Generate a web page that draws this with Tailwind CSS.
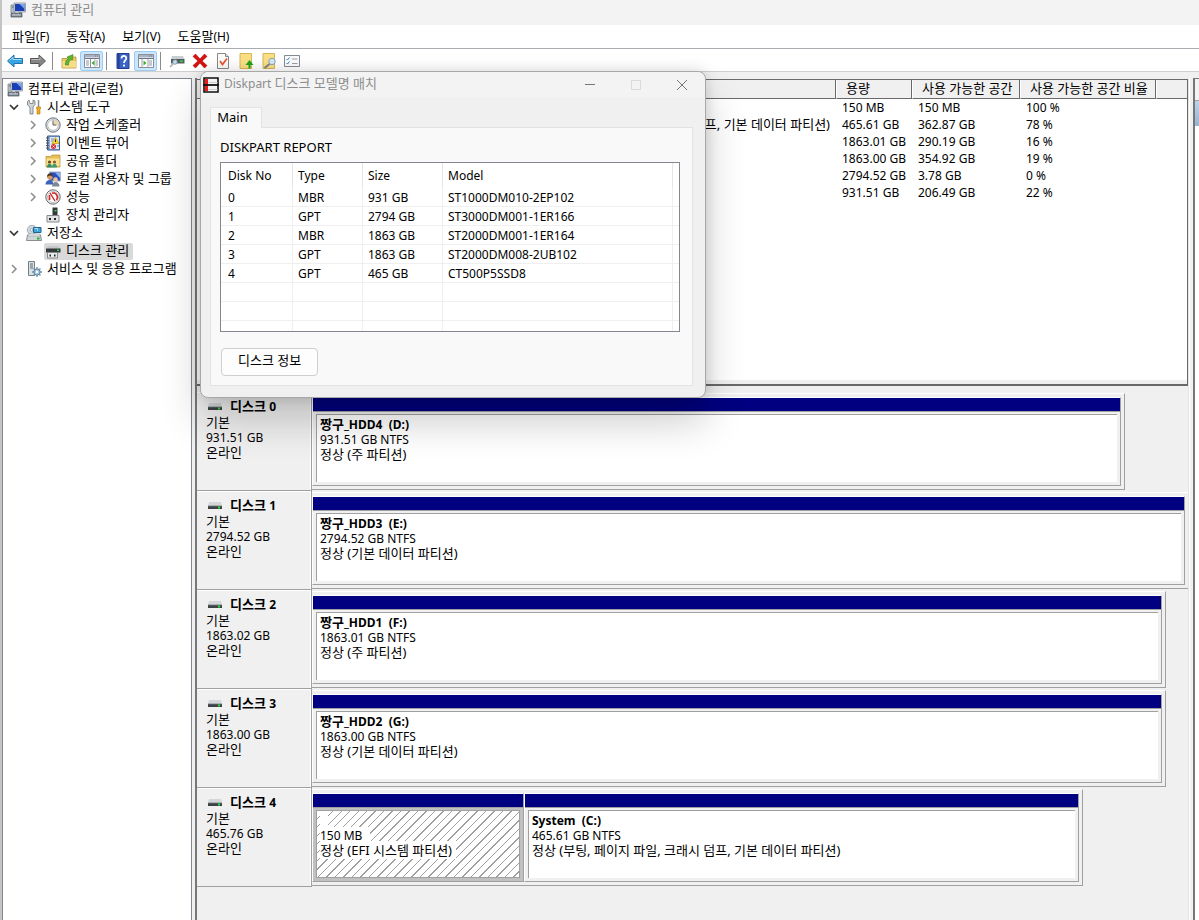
<!DOCTYPE html>
<html lang="ko">
<head>
<meta charset="utf-8">
<title>컴퓨터 관리</title>
<script src="https://cdn.jsdelivr.net/npm/@tailwindcss/browser@4"></script>
</head>
<body class="relative flex min-h-screen flex-col overflow-x-hidden border-l-2 border-[#c4c4c4] bg-[#f0f0f0] font-['Noto_Sans','Noto_Sans_CJK_KR',sans-serif] text-xs text-black">

<svg class="hidden" aria-hidden="true">
  <symbol id="computer" viewBox="0 0 16 16">
    <path d="M1 3h4v8H1z" fill="#b9bec6" stroke="#6f7883" stroke-width=".7"/>
    <path d="M2 5h2" stroke="#4a7b43"/>
    <path d="M4 1h11.5v9H4z" fill="#d5dae2" stroke="#7d8590" stroke-width=".7"/>
    <path d="M5 2h9.5v7H5z" fill="#1a3fb5"/><path d="M9.500 2h5v5z" fill="#7aa6ee"/>
    <path d="M8 10h4v1.500H8z" fill="#8a919b"/>
    <path d="M1 11.500h11v3.500H1z" fill="#7b868f" stroke="#47515a" stroke-width=".7"/>
    <path d="M2 13h9M4 11.500v1M8.500 11.500v1" stroke="#dfe4e8" stroke-width=".8"/>
  </symbol>
  <symbol id="open" viewBox="0 0 10 10"><path d="M1 3l4 4 4-4" fill="none" stroke="#333" stroke-width="1.700"/></symbol>
  <symbol id="closed" viewBox="0 0 10 10"><path d="M3 1l4 4-4 4" fill="none" stroke="#8b8b8b" stroke-width="1.500"/></symbol>
  <symbol id="disk" viewBox="0 0 14 8">
    <path d="M1 0h12l1 4H0z" fill="#d4d7da"/><path d="M0 4h14v3H0z" fill="#3d4245"/>
    <path d="M0 4h14" stroke="#70767a" stroke-width=".8"/><path d="M10 4.500h2v2h-2z" fill="#27e03a"/>
  </symbol>
  <symbol id="console" viewBox="0 0 16 14">
    <path d="M.5.500h15v13H.5z" fill="#fff" stroke="#878f9b"/><path d="M1 1h14v2.500H1z" fill="#a9b3c3"/>
    <path d="M1 4.500h14M11 2h1M13 2h1" stroke="#6a7482"/>
  </symbol>
</svg>

<header class="flex h-[25px] items-center gap-[5px] bg-[#f3f3f3] pb-[5px] pl-2 text-[13px] text-[#8d8d8d]">
  <svg class="size-4"><use href="#computer"/></svg><h1>컴퓨터 관리</h1>
</header>

<nav class="flex h-6 items-center gap-[17px] border-b border-[#a9adb2] bg-white pl-[10px] text-xs" aria-label="메뉴">
  <button><span class="text-[13px]">파일</span>(F)</button>
  <button><span class="text-[13px]">동작</span>(A)</button>
  <button><span class="text-[13px]">보기</span>(V)</button>
  <button><span class="text-[13px]">도움말</span>(H)</button>
</nav>

<div class="flex h-[23px] items-center border-b border-[#cfcfcf] bg-white pt-[2px] pl-px" role="toolbar" aria-label="도구 모음">
  <button class="flex h-5 w-[23px] items-center justify-center" aria-label="뒤로"><svg class="size-4" viewBox="0 0 16 16"><path d="M.5 8L7 2v3.500h8.500v5H7V14z" fill="#35a6e3" stroke="#2470a8"/><path d="M2.500 7.500L6 4.300v2.200h8.500" fill="none" stroke="#a6dcf7"/></svg></button>
  <button class="flex h-5 w-[23px] items-center justify-center" aria-label="앞으로"><svg class="size-4" viewBox="0 0 16 16"><path d="M15.500 8L9 2v3.500H.5v5H9V14z" fill="#868686" stroke="#555"/><path d="M1.500 6.500H10V4.300" fill="none" stroke="#bdbdbd"/></svg></button>
  <span class="mr-1 ml-[3px] h-[18px] w-px bg-[#8c8c8c]"></span>
  <button class="flex h-5 w-[23px] items-center justify-center" aria-label="위로"><svg class="size-4" viewBox="0 0 16 16"><path d="M1 5.500h5l1-1.500h8v11H1z" fill="#e9c765" stroke="#b8923a" stroke-width=".8"/><path d="M1.500 8H15v6.500H1.500z" fill="#f7de8b"/><path d="M4.500 12C4 8.500 5 7 7.500 5.500L6 4l6-2.500L11.500 7 10 6.500C8 8 7.500 9.500 7.500 12z" fill="#5cb531" stroke="#3d8a1f" stroke-width=".6"/></svg></button>
  <button class="flex h-5 w-[23px] items-center justify-center rounded-xs border border-[#99cdf5] bg-[#cce6fb]" aria-label="콘솔 트리 표시" aria-pressed="true"><svg class="h-[14px] w-4" viewBox="0 0 16 14"><use href="#console"/><path d="M6.500 5v8.500" stroke="#878f9b"/><path d="M2 7h3M2 9h3M2 11h3M12 7h2M12 9h2M12 11h2" stroke="#8b93a0"/><path d="M11 5v8" stroke="#b9c0ca"/><path d="M10.500 6.500v5L7.500 9z" fill="#3dae2b"/></svg></button>
  <span class="mr-1 ml-[3px] h-[18px] w-px bg-[#8c8c8c]"></span>
  <button class="flex h-5 w-[23px] items-center justify-center" aria-label="도움말"><svg class="size-4" viewBox="0 0 16 16"><path d="M2 .5h12v15H2z" fill="#3a63c6" stroke="#23408f"/><path d="M2.500 1h2v14h-2z" fill="#233f94"/><path d="M6.500 5.500C6.500 2 11.500 2.200 11.300 5.300 11.200 7.500 9 7.500 9 10" fill="none" stroke="#fff" stroke-width="1.700"/><circle cx="9" cy="12.600" r="1.100" fill="#fff"/></svg></button>
  <button class="flex h-5 w-[23px] items-center justify-center rounded-xs border border-[#99cdf5] bg-[#cce6fb]" aria-label="작업 창 표시" aria-pressed="true"><svg class="h-[14px] w-4" viewBox="0 0 16 14"><use href="#console"/><path d="M4 5v8M10 5v8.500" stroke="#9aa2ae"/><path d="M11 7h3M11 9h3M11 11h3" stroke="#8b93a0"/><path d="M5.500 6.500v5l3-2.500z" fill="#3dae2b"/></svg></button>
  <span class="mr-1 ml-[3px] h-[18px] w-px bg-[#8c8c8c]"></span>
  <button class="flex h-5 w-[23px] items-center justify-center" aria-label="디스크"><svg class="size-4" viewBox="0 0 16 16"><path d="M3 3h11l1.500 3.500H2z" fill="#c9ced1"/><path d="M2 6h13.500v4.500H2z" fill="#555c60"/><path d="M11 7.500h3V9h-3z" fill="#26dc3e"/><circle cx="6" cy="9" r="2.300" fill="#c3dbe9" stroke="#7592a3" stroke-width=".8"/><path d="M4.500 10.500L1 14" stroke="#a9b1b6" stroke-width="1.600"/></svg></button>
  <button class="flex h-5 w-[23px] items-center justify-center" aria-label="삭제"><svg class="size-4" viewBox="0 0 16 16"><path d="M1 3.500L3.500 1 8 6l4.500-5L15 3.500 10 8l5 4.500-2.500 2.500L8 10l-4.500 5L1 12.500 6 8z" fill="#d8120f" stroke="#a30604" stroke-width=".6"/></svg></button>
  <button class="flex h-5 w-[23px] items-center justify-center" aria-label="속성"><svg class="size-4" viewBox="0 0 16 16"><path d="M2.500.500h8l3 3v12h-11z" fill="#fafafa" stroke="#888"/><path d="M10.500.500v3h3" fill="#ddd" stroke="#888"/><path d="M5 8l2.500 3.500L12 5.500" fill="none" stroke="#e8532a" stroke-width="1.700"/></svg></button>
  <button class="flex h-5 w-[23px] items-center justify-center" aria-label="내보내기"><svg class="size-4" viewBox="0 0 16 16"><path d="M2 .500h11.500v15H2z" fill="#f9df84" stroke="#d8b557"/><path d="M10.500 15.500V12H7.500l4-5 4 5h-3v3.500z" fill="#1fa31f"/></svg></button>
  <button class="flex h-5 w-[23px] items-center justify-center" aria-label="찾기"><svg class="size-4" viewBox="0 0 16 16"><path d="M2 .500h11.500v15H2z" fill="#f9df84" stroke="#d8b557"/><path d="M8.500 11l-5 4" stroke="#75808a" stroke-width="1.800"/><circle cx="11" cy="8.500" r="3.200" fill="#d3e9f7" stroke="#8aa0b1"/></svg></button>
  <button class="flex h-5 w-[23px] items-center justify-center" aria-label="목록"><svg class="size-4" viewBox="0 0 16 16"><path d="M.5 2.500h15v11H.5z" fill="#fbfbfb" stroke="#848b93"/><path d="M2.500 6l1 1L5.500 4.500M2.500 10l1 1 2-2.500" fill="none" stroke="#2f80ce"/><path d="M8 6h5.500M8 10.500h5.500" stroke="#9aa0a6"/></svg></button>
</div>

<main class="flex flex-1 pt-[6px]">
  <nav class="w-[190px] shrink-0 border border-b-0 border-[#828790] bg-white pt-px text-[13px]" aria-label="콘솔 트리">
    <ul>
      <li class="flex h-[18px] items-center gap-[5px] pl-1"><svg class="size-4"><use href="#computer"/></svg>컴퓨터 관리(로컬)</li>
      <li class="flex h-[18px] items-center gap-[5px] pl-[6px]"><svg class="mr-[2px] size-[10px]"><use href="#open"/></svg><svg class="size-4" viewBox="0 0 16 16"><path d="M3 1L1.500 2.500V6L4 8v7h3V8l2-2.500V2L7 1v3.500H4z" fill="#d3d6d8" stroke="#7c8286" stroke-width=".9"/><path d="M12.500 1v7" stroke="#878d92" stroke-width="1.500"/><path d="M10.500 8h4v2l-.5.500v4.500h-3v-4.500l-.5-.5z" fill="#f3a81d" stroke="#b97a0b" stroke-width=".6"/></svg>시스템 도구</li>
      <li class="flex h-[18px] items-center gap-[5px] pl-[25px]"><svg class="mr-[2px] size-[10px]"><use href="#closed"/></svg><svg class="size-4" viewBox="0 0 16 16"><circle cx="8" cy="8" r="7.200" fill="#d9dde0" stroke="#6e767c"/><circle cx="8" cy="8" r="5.300" fill="#fff" stroke="#a9b2b9" stroke-width=".7"/><path d="M8 8V3a5 5 0 0 1 5 5z" fill="#f6d9a2"/><path d="M8 3.500V8h3.500" fill="none" stroke="#4a657c"/></svg>작업 스케줄러</li>
      <li class="flex h-[18px] items-center gap-[5px] pl-[25px]"><svg class="mr-[2px] size-[10px]"><use href="#closed"/></svg><svg class="size-4" viewBox="0 0 16 16"><path d="M2.500 1h12v14h-12z" fill="#88a9d9" stroke="#39598f"/><path d="M5 2h9v12H5z" fill="#dfe9f7"/><path d="M1 3h3M1 5.500h3M1 8h3M1 10.500h3M1 13h3" stroke="#555"/><path d="M6 4h3M6 6h2M12 11h2" stroke="#6f8fc1"/><path d="M10.500 2.500l3.500 6H7z" fill="#ffd42a" stroke="#b68e00" stroke-width=".6"/><path d="M10.500 4.500v2.500" stroke="#222"/><circle cx="8.500" cy="11.500" r="2.500" fill="#d92b2b"/><path d="M7.500 10.500l2 2m0-2l-2 2" stroke="#fff" stroke-width=".8"/></svg>이벤트 뷰어</li>
      <li class="flex h-[18px] items-center gap-[5px] pl-[25px]"><svg class="mr-[2px] size-[10px]"><use href="#closed"/></svg><svg class="size-4" viewBox="0 0 16 16"><path d="M1 3.500h5l1-1.500h8v12H1z" fill="#e5be58" stroke="#b48d31" stroke-width=".7"/><path d="M1.500 5.500h13V13h-13z" fill="#f9e08e"/><circle cx="4.500" cy="9" r="1.600" fill="#6b4a2b"/><path d="M2 14.500c0-5 5-5 5 0z" fill="#2f8f6a"/><circle cx="9.500" cy="9" r="1.600" fill="#8c5b35"/><path d="M7 14.500c0-5 5-5 5 0z" fill="#3f9a76"/></svg>공유 폴더</li>
      <li class="flex h-[18px] items-center gap-[5px] pl-[25px]"><svg class="mr-[2px] size-[10px]"><use href="#closed"/></svg><svg class="size-4" viewBox="0 0 16 16"><path d="M4.500 1h11v9h-11z" fill="#2450c4" stroke="#aab2c0"/><path d="M10 1.500h5V7z" fill="#8db4f0"/><circle cx="5" cy="6" r="2.800" fill="#d29a63"/><path d="M2 6c0-5 6-5 6 0-2-2-4-2-6 0z" fill="#4d3420"/><path d="M.5 13.500c0-6 8-6 8 0z" fill="#3a62bd"/><circle cx="10.500" cy="8.500" r="2.300" fill="#f0c293"/><path d="M7 15.500c0-6 7.500-6 7.500 0z" fill="#7d8895"/></svg>로컬 사용자 및 그룹</li>
      <li class="flex h-[18px] items-center gap-[5px] pl-[25px]"><svg class="mr-[2px] size-[10px]"><use href="#closed"/></svg><svg class="size-4" viewBox="0 0 16 16"><circle cx="8" cy="8" r="7.200" fill="#f3f3f3" stroke="#62686c"/><circle cx="8" cy="8" r="5.500" fill="#fff" stroke="#9b9b9b" stroke-width=".6"/><path d="M4.500 11V6M7 4h2.500A4.600 4.600 0 0 1 11.500 11" fill="none" stroke="#d82020" stroke-width="1.600"/><path d="M5 4l5 8" stroke="#c22" stroke-width="1.400"/></svg>성능</li>
      <li class="flex h-[18px] items-center gap-[5px] pl-[42px]"><svg class="size-4" viewBox="0 0 16 16"><path d="M7.500.500h5v8h-5z" fill="#33383b"/><path d="M9.500 3h2v1.500h-2z" fill="#38d14a"/><path d="M2 8.500h12V15H2z" fill="#e1e3e4" stroke="#85898c"/><path d="M4 11h2v2H4zM9 11h2v2H9z" fill="#222"/></svg>장치 관리자</li>
      <li class="flex h-[18px] items-center gap-[5px] pl-[6px]"><svg class="mr-[2px] size-[10px]"><use href="#open"/></svg><svg class="size-4" viewBox="0 0 16 16"><circle cx="6" cy="5" r="4.700" fill="#ced8df" stroke="#8d9aa3" stroke-width=".7"/><circle cx="5.500" cy="5" r="1.300" fill="#fff" stroke="#7c8b96" stroke-width=".6"/><path d="M7.500 2.500H15v5H7.500z" fill="#40a4dc" stroke="#22668d"/><path d="M8.500 3.500h3v2" stroke="#b6e2f7" fill="none"/><path d="M1.500 10h13l1 5.500H.5z" fill="#d0d5d8" stroke="#6e777d" stroke-width=".8"/><path d="M2 9l12 0v2H2z" fill="#f1f3f4" stroke="#8f979c" stroke-width=".6"/><path d="M11 12.500h2.500v2H11z" fill="#1fb432"/></svg>저장소</li>
      <li class="flex h-[18px] items-center pl-[41px]"><a href="#volumes" aria-current="page" class="flex h-[17px] items-center gap-[5px] rounded-xs bg-[#d9d9d9] pr-1 pl-px"><svg class="size-4" viewBox="0 0 16 16"><path d="M2.500 3h11L15.500 6H1z" fill="#c4c8ca"/><path d="M1 5.500h14.500v4H1z" fill="#34393c"/><path d="M12 6.500h2V8h-2z" fill="#29d63f"/><path d="M2.500 9.500h10V15h-10z" fill="#eaebec" stroke="#85898c"/><path d="M4.500 11.500h1.500v2H4.500zM9 11.500h1.500v2H9z" fill="#222"/></svg>디스크 관리</a></li>
      <li class="flex h-[18px] items-center gap-[5px] pl-[6px]"><svg class="mr-[2px] size-[10px]"><use href="#closed"/></svg><svg class="size-4" viewBox="0 0 16 16"><path d="M2.500.500h6v14h-6z" fill="#dce1e4" stroke="#737e86"/><path d="M4 3h3M4 5h3M4 7h3" stroke="#5d6b75"/><circle cx="11" cy="11" r="3.200" fill="#a7c7df" stroke="#587b96"/><path d="M11 6v2M11 14v2M6 11h2M14 11h2M7.500 7.500l1.300 1.300M13.200 13.200l1.300 1.300M7.500 14.500l1.300-1.300M13.200 8.800l1.300-1.300" stroke="#6f93ad" stroke-width="1.300"/><circle cx="11" cy="11" r="1.200" fill="#fff"/></svg>서비스 및 응용 프로그램</li>
    </ul>
  </nav>

  <div class="ml-[3px] flex min-w-0 flex-1 flex-col border-l-2 border-[#77777a]">
    <section id="volumes" class="h-[308px] pt-px" aria-label="볼륨 목록">
      <div class="h-full border-t border-r border-b-2 border-[#696969] bg-[#f0f0f0] pb-1">
        <div class="h-full bg-white">
          <table class="w-full table-fixed border-separate border-spacing-0 text-left whitespace-nowrap">
            <colgroup><col><col class="w-[76px]"><col class="w-[108px]"><col class="w-[136px]"><col class="w-[31px]"></colgroup>
            <thead>
              <tr class="h-[19px] bg-[#f0f0f0] text-[13px]">
                <th class="border-r border-b border-[#696969] p-0 font-normal"></th>
                <th class="border-r border-b border-l border-[#696969] border-l-white p-0 pl-[9px] font-normal">용량</th>
                <th class="border-r border-b border-l border-[#696969] border-l-white p-0 pl-[9px] font-normal">사용 가능한 공간</th>
                <th class="border-r border-b border-l border-[#696969] border-l-white p-0 pl-[9px] font-normal">사용 가능한 공간 비율</th>
                <th class="border-b border-l border-[#696969] border-l-white p-0"></th>
              </tr>
            </thead>
            <tbody>
              <tr class="h-[17px] leading-[17px]"><td class="p-0"></td><td class="p-0 pl-[6px]">150 MB</td><td class="p-0 pl-[6px]">150 MB</td><td class="p-0 pl-[6px]">100 %</td><td></td></tr>
              <tr class="h-[17px] leading-[17px]"><td class="p-0 pr-[6px] text-right text-[13px]">정상 (부팅, 페이지 파일, 크래시 덤프, 기본 데이터 파티션)</td><td class="p-0 pl-[6px]">465.61 GB</td><td class="p-0 pl-[6px]">362.87 GB</td><td class="p-0 pl-[6px]">78 %</td><td></td></tr>
              <tr class="h-[17px] leading-[17px]"><td class="p-0"></td><td class="p-0 pl-[6px]">1863.01 GB</td><td class="p-0 pl-[6px]">290.19 GB</td><td class="p-0 pl-[6px]">16 %</td><td></td></tr>
              <tr class="h-[17px] leading-[17px]"><td class="p-0"></td><td class="p-0 pl-[6px]">1863.00 GB</td><td class="p-0 pl-[6px]">354.92 GB</td><td class="p-0 pl-[6px]">19 %</td><td></td></tr>
              <tr class="h-[17px] leading-[17px]"><td class="p-0"></td><td class="p-0 pl-[6px]">2794.52 GB</td><td class="p-0 pl-[6px]">3.78 GB</td><td class="p-0 pl-[6px]">0 %</td><td></td></tr>
              <tr class="h-[17px] leading-[17px]"><td class="p-0"></td><td class="p-0 pl-[6px]">931.51 GB</td><td class="p-0 pl-[6px]">206.49 GB</td><td class="p-0 pl-[6px]">22 %</td><td></td></tr>
            </tbody>
          </table>
        </div>
      </div>
    </section>

    <section class="flex-1 overflow-hidden pt-[6px]" aria-label="디스크">
      <article class="flex h-[99px]">
        <div class="w-[115px] shrink-0 border-r border-b border-[#a0a0a0]">
          <div class="h-full border-t border-r border-white pt-[5px] pl-[9px] leading-[15px]">
            <h2 class="flex items-center gap-2 pl-[2px] text-[13px] leading-4 font-bold"><svg class="h-2 w-[14px]"><use href="#disk"/></svg><span>디스크 <span class="text-xs">0</span></span></h2>
            <p class="text-[13px] leading-[15px]">기본</p><p>931.51 GB</p><p class="text-[13px] leading-[15px]">온라인</p>
          </div>
        </div>
        <div class="flex-1 py-px">
          <div class="h-full w-[92.8%] border-t border-r border-b border-[#a0a0a0] border-t-white pt-[3px] pr-[3px] pb-[3px]">
            <div class="flex h-full flex-col border border-[#a0a0a0] border-t-white border-l-white">
              <div class="h-[14px] border-b border-[#a0a0a0] bg-[#000080]"></div>
              <div class="flex-1 px-[3px] pt-[2px] pb-[3px]"><div class="h-full border-t border-l border-[#a0a0a0] bg-white pt-[2px] pl-[3px] leading-[15px]">
                <h3 class="font-bold whitespace-pre"><span class="text-[13px] leading-[15px]">짱구</span>_HDD4  (D:)</h3><p>931.51 GB NTFS</p><p class="text-[13px] leading-[15px]">정상 (주 파티션)</p></div></div>
            </div>
          </div>
        </div>
      </article>

      <article class="flex h-[99px]">
        <div class="w-[115px] shrink-0 border-r border-b border-[#a0a0a0]">
          <div class="h-full border-t border-r border-white pt-[5px] pl-[9px] leading-[15px]">
            <h2 class="flex items-center gap-2 pl-[2px] text-[13px] leading-4 font-bold"><svg class="h-2 w-[14px]"><use href="#disk"/></svg><span>디스크 <span class="text-xs">1</span></span></h2>
            <p class="text-[13px] leading-[15px]">기본</p><p>2794.52 GB</p><p class="text-[13px] leading-[15px]">온라인</p>
          </div>
        </div>
        <div class="flex-1 py-px">
          <div class="h-full w-full border-t border-b border-[#a0a0a0] border-t-white pt-[3px] pr-[3px] pb-[3px]">
            <div class="flex h-full flex-col border border-[#a0a0a0] border-t-white border-l-white">
              <div class="h-[14px] border-b border-[#a0a0a0] bg-[#000080]"></div>
              <div class="flex-1 px-[3px] pt-[2px] pb-[3px]"><div class="h-full border-t border-l border-[#a0a0a0] bg-white pt-[2px] pl-[3px] leading-[15px]">
                <h3 class="font-bold whitespace-pre"><span class="text-[13px] leading-[15px]">짱구</span>_HDD3  (E:)</h3><p>2794.52 GB NTFS</p><p class="text-[13px] leading-[15px]">정상 (기본 데이터 파티션)</p></div></div>
            </div>
          </div>
        </div>
      </article>

      <article class="flex h-[99px]">
        <div class="w-[115px] shrink-0 border-r border-b border-[#a0a0a0]">
          <div class="h-full border-t border-r border-white pt-[5px] pl-[9px] leading-[15px]">
            <h2 class="flex items-center gap-2 pl-[2px] text-[13px] leading-4 font-bold"><svg class="h-2 w-[14px]"><use href="#disk"/></svg><span>디스크 <span class="text-xs">2</span></span></h2>
            <p class="text-[13px] leading-[15px]">기본</p><p>1863.02 GB</p><p class="text-[13px] leading-[15px]">온라인</p>
          </div>
        </div>
        <div class="flex-1 py-px">
          <div class="h-full w-[97.5%] border-t border-r border-b border-[#a0a0a0] border-t-white pt-[3px] pr-[3px] pb-[3px]">
            <div class="flex h-full flex-col border border-[#a0a0a0] border-t-white border-l-white">
              <div class="h-[14px] border-b border-[#a0a0a0] bg-[#000080]"></div>
              <div class="flex-1 px-[3px] pt-[2px] pb-[3px]"><div class="h-full border-t border-l border-[#a0a0a0] bg-white pt-[2px] pl-[3px] leading-[15px]">
                <h3 class="font-bold whitespace-pre"><span class="text-[13px] leading-[15px]">짱구</span>_HDD1  (F:)</h3><p>1863.01 GB NTFS</p><p class="text-[13px] leading-[15px]">정상 (주 파티션)</p></div></div>
            </div>
          </div>
        </div>
      </article>

      <article class="flex h-[99px]">
        <div class="w-[115px] shrink-0 border-r border-b border-[#a0a0a0]">
          <div class="h-full border-t border-r border-white pt-[5px] pl-[9px] leading-[15px]">
            <h2 class="flex items-center gap-2 pl-[2px] text-[13px] leading-4 font-bold"><svg class="h-2 w-[14px]"><use href="#disk"/></svg><span>디스크 <span class="text-xs">3</span></span></h2>
            <p class="text-[13px] leading-[15px]">기본</p><p>1863.00 GB</p><p class="text-[13px] leading-[15px]">온라인</p>
          </div>
        </div>
        <div class="flex-1 py-px">
          <div class="h-full w-[97.5%] border-t border-r border-b border-[#a0a0a0] border-t-white pt-[3px] pr-[3px] pb-[3px]">
            <div class="flex h-full flex-col border border-[#a0a0a0] border-t-white border-l-white">
              <div class="h-[14px] border-b border-[#a0a0a0] bg-[#000080]"></div>
              <div class="flex-1 px-[3px] pt-[2px] pb-[3px]"><div class="h-full border-t border-l border-[#a0a0a0] bg-white pt-[2px] pl-[3px] leading-[15px]">
                <h3 class="font-bold whitespace-pre"><span class="text-[13px] leading-[15px]">짱구</span>_HDD2  (G:)</h3><p>1863.00 GB NTFS</p><p class="text-[13px] leading-[15px]">정상 (기본 데이터 파티션)</p></div></div>
            </div>
          </div>
        </div>
      </article>

      <article class="flex h-[99px]">
        <div class="w-[115px] shrink-0 border-r border-b border-[#a0a0a0]">
          <div class="h-full border-t border-r border-white pt-[5px] pl-[9px] leading-[15px]">
            <h2 class="flex items-center gap-2 pl-[2px] text-[13px] leading-4 font-bold"><svg class="h-2 w-[14px]"><use href="#disk"/></svg><span>디스크 <span class="text-xs">4</span></span></h2>
            <p class="text-[13px] leading-[15px]">기본</p><p>465.76 GB</p><p class="text-[13px] leading-[15px]">온라인</p>
          </div>
        </div>
        <div class="flex-1 py-px">
          <div class="flex h-full w-[88%] border-t border-r border-b border-[#a0a0a0] border-t-white pt-[3px] pr-[3px] pb-[3px]">
            <div class="flex h-full w-[212px] shrink-0 flex-col border border-[#a0a0a0] border-t-white border-l-white">
              <div class="h-[14px] border-b border-[#a0a0a0] bg-[#000080]"></div>
              <div class="flex-1 bg-[#c0c0c0] px-[3px] pt-[2px] pb-[3px]"><div class="h-full border border-[#a0a0a0] bg-white bg-[repeating-linear-gradient(135deg,#fff_0px,#fff_5px,#a0a0a0_5px,#a0a0a0_6px)] pl-[3px] leading-[15px]">
                <div class="h-[17px] w-2 bg-white"></div><p><span class="bg-white pr-2">150 MB</span></p><p class="text-[13px] leading-[15px]"><span class="bg-white pr-1">정상 (EFI 시스템 파티션)</span></p></div></div>
            </div>
            <div class="flex h-full flex-1 flex-col border border-[#a0a0a0] border-t-white border-l-white">
              <div class="h-[14px] border-b border-[#a0a0a0] bg-[#000080]"></div>
              <div class="flex-1 px-[3px] pt-[2px] pb-[3px]"><div class="h-full border-t border-l border-[#a0a0a0] bg-white pt-[2px] pl-[3px] leading-[15px]">
                <h3 class="font-bold whitespace-pre">System  (C:)</h3><p>465.61 GB NTFS</p><p class="text-[13px] leading-[15px]">정상 (부팅, 페이지 파일, 크래시 덤프, 기본 데이터 파티션)</p></div></div>
            </div>
          </div>
        </div>
      </article>
    </section>
  </div>

  <aside class="flex w-[11px] shrink-0 border-l border-[#e3e3e3]" aria-label="작업">
    <div class="w-1 border-l border-white"></div>
    <div class="flex-1 border-t border-l-2 border-[#777] bg-white">
      <div class="h-[22px] border-b border-[#a0a0a0] bg-[#f3f3f3]"></div>
      <div class="h-[25px] bg-linear-to-b from-[#bdd2ea] to-[#99b4d1]"></div>
    </div>
  </aside>
</main>

<section role="dialog" aria-labelledby="dialog-title" class="absolute top-[71px] left-[198px] flex w-[506px] flex-col rounded-lg border border-[#a8a8a8] bg-[#f0f0f0] shadow-[0_24px_40px_rgba(0,0,0,0.2),0_0_14px_rgba(0,0,0,0.14)]">
  <header class="flex h-[25px] items-center rounded-t-lg bg-[#f3f3f3] pl-[2px]">
    <svg class="size-4" viewBox="0 0 16 16"><path d="M1 1h14v14H1z" fill="#f4f4f4" stroke="#111" stroke-width="1.600"/><path d="M2 2h3v12H2z" fill="#f01818"/><path d="M0 8h16" stroke="#111" stroke-width="1.800"/><path d="M5.500 5.500h9M5.500 12.500h9" stroke="#ccc"/></svg>
    <h2 id="dialog-title" class="flex-1 pb-px pl-[5px] text-[#8d8d8d]">Diskpart <span class="text-[13px]">디스크 모델명 매치</span></h2>
    <button class="flex h-full w-[46px] items-center justify-center" aria-label="최소화"><svg class="size-[10px]" viewBox="0 0 10 10"><path d="M0 4.500h10" stroke="#777"/></svg></button>
    <button class="flex h-full w-[46px] items-center justify-center" aria-label="최대화" disabled><svg class="size-[10px]" viewBox="0 0 10 10"><path d="M.5.500h9v9h-9z" fill="none" stroke="#dadada"/></svg></button>
    <button class="flex h-full w-[46px] items-center justify-center" aria-label="닫기"><svg class="size-[10px]" viewBox="0 0 10 10"><path d="M0 0l10 10M10 0L0 10" stroke="#777"/></svg></button>
  </header>
  <div class="pt-[10px] pr-3 pb-[11px] pl-[9px]">
    <div role="tablist" class="-mb-px flex"><button role="tab" aria-selected="true" class="h-[21px] w-[52px] border border-b-0 border-[#e3e3e3] bg-[#f9f9f9] pr-[7px] pb-[3px] text-[13px] leading-4">Main</button></div>
    <div role="tabpanel" class="border border-[#e3e3e3] bg-[#f9f9f9] px-[9px] pt-[11px] pb-[9px]">
      <h3 class="text-[13px] leading-4">DISKPART REPORT</h3>
      <div class="mt-[7px] mr-[3px] border border-[#828790] bg-white">
        <table class="w-full table-fixed border-separate border-spacing-0 text-left">
          <colgroup><col class="w-[72px]"><col class="w-[70px]"><col class="w-20"><col class="w-[230px]"><col></colgroup>
          <thead><tr class="h-[25px]">
            <th class="border-r border-[#e5e5e5] p-0 pl-[7px] font-normal">Disk No</th><th class="border-r border-[#e5e5e5] p-0 pl-[5px] font-normal">Type</th><th class="border-r border-[#e5e5e5] p-0 pl-[5px] font-normal">Size</th><th class="border-r border-[#e5e5e5] p-0 pl-[5px] font-normal">Model</th><th class="p-0"></th>
          </tr></thead>
          <tbody>
            <tr class="h-[19px]"><td class="border-r border-b border-[#efefef] p-0 pt-[2px] pl-[7px]">0</td><td class="border-r border-b border-[#efefef] p-0 pt-[2px] pl-[5px]">MBR</td><td class="border-r border-b border-[#efefef] p-0 pt-[2px] pl-[5px]">931 GB</td><td class="border-r border-b border-[#efefef] p-0 pt-[2px] pl-[5px]">ST1000DM010-2EP102</td><td class="border-b border-[#efefef] p-0"></td></tr>
            <tr class="h-[19px]"><td class="border-r border-b border-[#efefef] p-0 pt-[2px] pl-[7px]">1</td><td class="border-r border-b border-[#efefef] p-0 pt-[2px] pl-[5px]">GPT</td><td class="border-r border-b border-[#efefef] p-0 pt-[2px] pl-[5px]">2794 GB</td><td class="border-r border-b border-[#efefef] p-0 pt-[2px] pl-[5px]">ST3000DM001-1ER166</td><td class="border-b border-[#efefef] p-0"></td></tr>
            <tr class="h-[19px]"><td class="border-r border-b border-[#efefef] p-0 pt-[2px] pl-[7px]">2</td><td class="border-r border-b border-[#efefef] p-0 pt-[2px] pl-[5px]">MBR</td><td class="border-r border-b border-[#efefef] p-0 pt-[2px] pl-[5px]">1863 GB</td><td class="border-r border-b border-[#efefef] p-0 pt-[2px] pl-[5px]">ST2000DM001-1ER164</td><td class="border-b border-[#efefef] p-0"></td></tr>
            <tr class="h-[19px]"><td class="border-r border-b border-[#efefef] p-0 pt-[2px] pl-[7px]">3</td><td class="border-r border-b border-[#efefef] p-0 pt-[2px] pl-[5px]">GPT</td><td class="border-r border-b border-[#efefef] p-0 pt-[2px] pl-[5px]">1863 GB</td><td class="border-r border-b border-[#efefef] p-0 pt-[2px] pl-[5px]">ST2000DM008-2UB102</td><td class="border-b border-[#efefef] p-0"></td></tr>
            <tr class="h-[19px]"><td class="border-r border-b border-[#efefef] p-0 pt-[2px] pl-[7px]">4</td><td class="border-r border-b border-[#efefef] p-0 pt-[2px] pl-[5px]">GPT</td><td class="border-r border-b border-[#efefef] p-0 pt-[2px] pl-[5px]">465 GB</td><td class="border-r border-b border-[#efefef] p-0 pt-[2px] pl-[5px]">CT500P5SSD8</td><td class="border-b border-[#efefef] p-0"></td></tr>
            <tr class="h-[19px]"><td class="border-r border-b border-[#efefef]"></td><td class="border-r border-b border-[#efefef]"></td><td class="border-r border-b border-[#efefef]"></td><td class="border-r border-b border-[#efefef]"></td><td class="border-b border-[#efefef]"></td></tr>
            <tr class="h-[19px]"><td class="border-r border-b border-[#efefef]"></td><td class="border-r border-b border-[#efefef]"></td><td class="border-r border-b border-[#efefef]"></td><td class="border-r border-b border-[#efefef]"></td><td class="border-b border-[#efefef]"></td></tr>
            <tr class="h-[10px]"><td class="border-r border-[#efefef]"></td><td class="border-r border-[#efefef]"></td><td class="border-r border-[#efefef]"></td><td class="border-r border-[#efefef]"></td><td></td></tr>
          </tbody>
        </table>
      </div>
      <button class="mt-4 ml-px h-7 rounded-sm border border-[#cfcfcf] bg-[#fdfdfd] px-4 pb-[2px] text-[13px]">디스크 정보</button>
    </div>
  </div>
</section>
</body>
</html>
